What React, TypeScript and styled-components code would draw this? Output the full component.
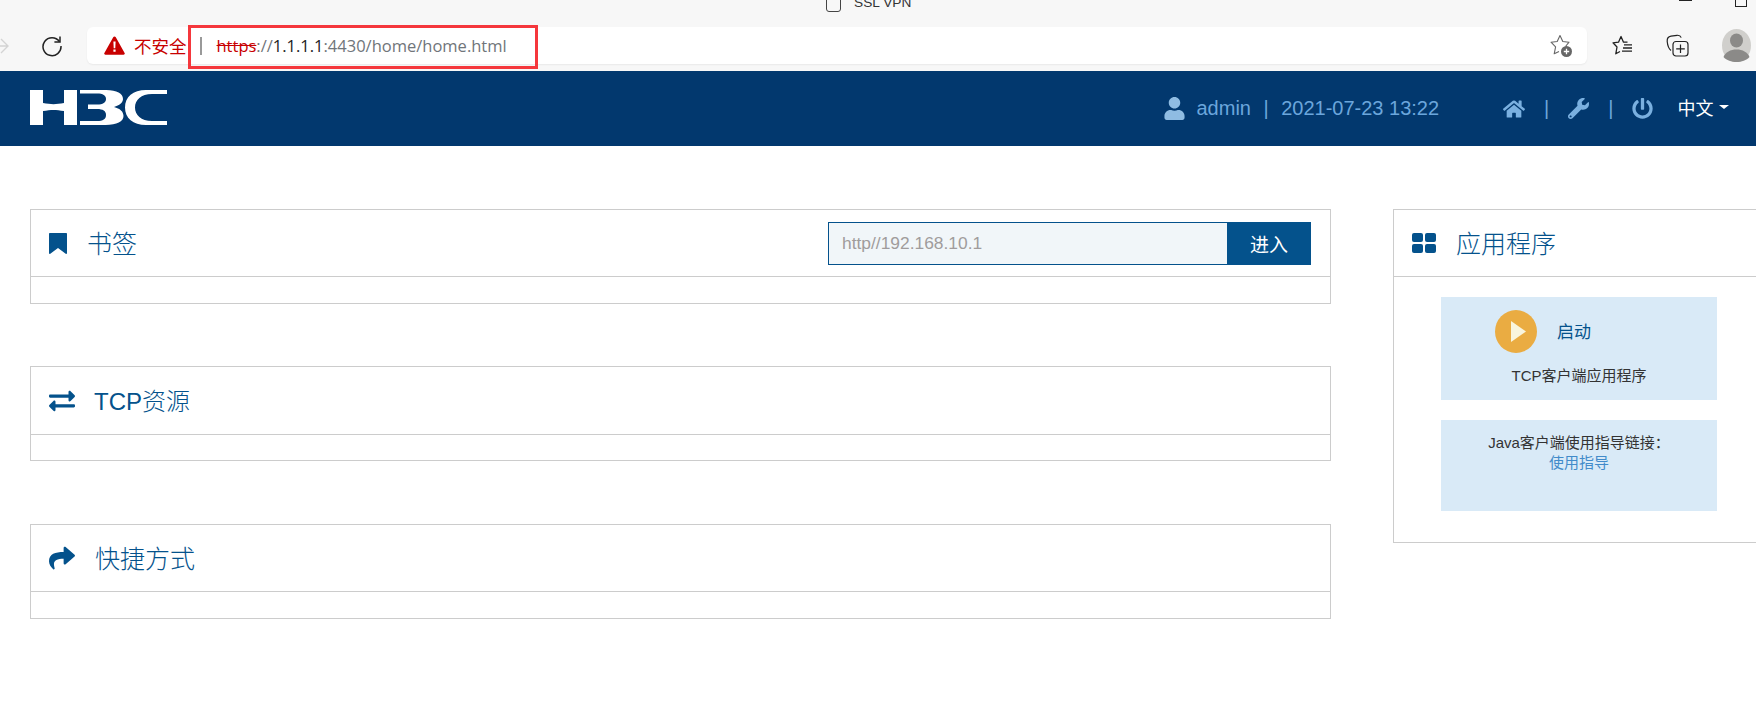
import React from "react";
import styled, { createGlobalStyle } from "styled-components";
import { FaExchangeAlt, FaHome, FaPowerOff, FaShare, FaUser, FaWrench } from "react-icons/fa";

const GlobalStyle = createGlobalStyle`
  html, body {
    margin: 0;
    padding: 0;
    background: #fff;
    overflow: hidden;
  }
  body {
    font-family: "Liberation Sans", "Noto Sans CJK SC", sans-serif;
  }
`;

const blue = "#04528c";
const line = "#cccccc";

function H3cLogo() {
  return (
    <svg width="137" height="35" viewBox="0 0 137 35" fill="#fff">
      <path d="M0 0h13v13c8 1.500 13 1.500 21 0V0h13v35H34V21c-8-1.500-13-1.500-21 0v14H0z" />
      <path d="M50 0h26c11 0 17 3.500 17 9 0 3.500-3.500 6.500-9 8 6 1.500 9.500 4.500 9.500 9 0 5.500-6.500 9-18 9H50v-4h17c6 0 9-2 9-6 0-4-3-6-9-6H58v-4.500h9c6 0 9-2 9-5.500 0-3.500-3-5.500-9-5.500H50z" />
      <path d="M137 0v4h-15c-11 0-17 6-17 13.500S111 31 122 31h15v4h-21c-13 0-21-7-21-17.500S103 0 116 0z" />
    </svg>
  );
}

function ReloadIcon() {
  return (
    <svg width="22" height="22" viewBox="0 0 22 22" fill="none" stroke="#222" strokeWidth="1.5">
      <path d="M18.4 6.500A9 9 0 1 0 20 11" />
      <path d="M19 1.500v5.600h-5.600" />
    </svg>
  );
}

function BackArrow() {
  return (
    <svg width="9" height="18" viewBox="0 0 9 18" fill="none" stroke="#d4d4d4" strokeWidth="1.4">
      <path d="M-6 9h14M1 2l7 7-7 7" />
    </svg>
  );
}

function WarningIcon() {
  return (
    <svg width="21" height="19" viewBox="0 0 21 19">
      <path d="M10.500 0.500c.6 0 1 .3 1.300 .8l8.800 15.600c.5 .9 0 1.800-1 1.800H1.400c-1 0-1.500-.9-1-1.800L9.200 1.300c.3-.5 .7-.8 1.300-.8z" fill="#c80000" />
      <path d="M9.400 5.500h2.200l-.3 6.800H9.700zM9.400 13.600h2.200v2.200H9.400z" fill="#fff" />
    </svg>
  );
}

function StarAddIcon() {
  return (
    <svg width="23" height="24" viewBox="0 0 23 24" fill="none">
      <path d="M15.500 12.500L19 8.200l-6.200-.7L10 1.500 7.200 7.500 1 8.200l4.600 4.600-1.400 7L9 17.500" stroke="#666" strokeWidth="1.100" strokeLinejoin="round" />
      <circle cx="16.500" cy="17.500" r="5.500" fill="#666" />
      <path d="M13.800 17.500h5.400M16.500 14.800v5.400" stroke="#fff" strokeWidth="1.300" />
    </svg>
  );
}

function FavoritesIcon() {
  return (
    <svg width="21" height="21" viewBox="0 0 21 21" fill="none" stroke="#222" strokeWidth="1.300" strokeLinejoin="round">
      <path d="M15.500 7.200h-4L9 1.500 6.500 7.200 1 7.800l4 4.200-1.200 6.800L8 16.500" />
      <path d="M12 9.800h8M11 13h9M10 16.200h10" />
    </svg>
  );
}

function CollectionsIcon() {
  return (
    <svg width="23" height="23" viewBox="0 0 23 23" fill="none" stroke="#222" strokeWidth="1.200">
      <path d="M5 16.500C3 15 1.600 11.500 1.200 7.500 1 4.500 2.500 2.600 5 2.200l6-.9c2-.2 3.500 .5 4.200 2.300" />
      <rect x="7" y="7.500" width="15" height="14.500" rx="3" />
      <path d="M14.500 10.500v8.500M10.200 14.800h8.600" />
    </svg>
  );
}

function Avatar() {
  return (
    <svg width="29" height="33" viewBox="0 0 29 33">
      <ellipse cx="14.500" cy="16.500" rx="14.500" ry="16.500" fill="#d0cfcc" />
      <ellipse cx="14.500" cy="11.500" rx="6.500" ry="7" fill="#8b8a88" />
      <path d="M1.500 28c2-5 7-7.500 13-7.500s11 2.500 13 7.500c-3 3.500-8 5-13 5s-10-1.500-13-5z" fill="#8b8a88" />
    </svg>
  );
}

function BookmarkIcon() {
  return (
    <svg width="18" height="21" viewBox="0 0 18 21" fill={blue}>
      <path d="M1 0h16c.6 0 1 .4 1 1v19c0 .8-.7 1.200-1.300 .7L9 15l-7.700 5.700C.7 21.200 0 20.800 0 20V1c0-.6 .4-1 1-1z" />
    </svg>
  );
}

function GridIcon() {
  return (
    <svg width="24" height="20" viewBox="0 0 24 20" fill={blue}>
      <rect width="11" height="9" rx="2" />
      <rect x="13" width="11" height="9" rx="2" />
      <rect y="11" width="11" height="9" rx="2" />
      <rect x="13" y="11" width="11" height="9" rx="2" />
    </svg>
  );
}

function PlayIcon() {
  return (
    <svg width="42" height="43" viewBox="0 0 42 43">
      <ellipse cx="21" cy="21.500" rx="21" ry="21.500" fill="#eaac42" />
      <path d="M16 11l15 10.500L16 32z" fill="#f9f5de" />
    </svg>
  );
}

export default function App() {
  return (
    <>
      <GlobalStyle />
      <Chrome>
        <TitleRow>
          <TabIcon />
          <TabTitle>SSL VPN</TabTitle>
          <Minimize />
          <Restore />
        </TitleRow>
        <Toolbar>
          <BackSlot>
            <BackArrow />
          </BackSlot>
          <ReloadSlot>
            <ReloadIcon />
          </ReloadSlot>
          <Address>
            <WarningIcon />
            <NotSecure>不安全</NotSecure>
            <Divider />
            <Url>
              <Scheme>https</Scheme>://<Host>1.1.1.1</Host>:4430/home/home.html
            </Url>
            <StarSlot>
              <StarAddIcon />
            </StarSlot>
            <Highlight />
          </Address>
          <ToolIcons>
            <FavoritesIcon />
            <CollectionsIcon />
            <Avatar />
          </ToolIcons>
        </Toolbar>
      </Chrome>

      <Header>
        <LogoSlot>
          <H3cLogo />
        </LogoSlot>
        <UserArea>
          <UserIcon size={23} />
          <HeaderText>admin</HeaderText>
          <HeaderText>|</HeaderText>
          <HeaderText>2021-07-23 13:22</HeaderText>
        </UserArea>
        <ActionArea>
          <FaHome size={22} />
          <ActionPipe>|</ActionPipe>
          <FaWrench size={21} />
          <ActionPipe>|</ActionPipe>
          <FaPowerOff size={21} />
        </ActionArea>
        <LangButton>
          中文<Caret />
        </LangButton>
      </Header>

      <Main>
        <LeftColumn>
          <Panel>
            <PanelHead>
              <BookmarkIcon />
              <PanelTitle $gap={20}>书签</PanelTitle>
              <SearchBox>
                <SearchInput placeholder="http//192.168.10.1" />
                <SearchButton>进入</SearchButton>
              </SearchBox>
            </PanelHead>
            <PanelBody />
          </Panel>
          <Panel $top={62}>
            <PanelHead $height={68}>
              <FaExchangeAlt size={26} />
              <PanelTitle $gap={19} $size={24}>TCP资源</PanelTitle>
            </PanelHead>
            <PanelBody $height={25} />
          </Panel>
          <Panel $top={63}>
            <PanelHead>
              <FaShare size={26} />
              <PanelTitle $gap={20}>快捷方式</PanelTitle>
            </PanelHead>
            <PanelBody />
          </Panel>
        </LeftColumn>

        <RightPanel>
          <PanelHead>
            <GridIcon />
            <PanelTitle $gap={20}>应用程序</PanelTitle>
          </PanelHead>
          <AppBody>
            <StartCard>
              <StartRow>
                <PlayIcon />
                <StartLabel>启动</StartLabel>
              </StartRow>
              <CardText>TCP客户端应用程序</CardText>
            </StartCard>
            <GuideCard>
              <CardText>Java客户端使用指导链接：</CardText>
              <GuideLink href="#">使用指导</GuideLink>
            </GuideCard>
          </AppBody>
        </RightPanel>
      </Main>
    </>
  );
}

const Chrome = styled.div`
  height: 71px;
  background: #f7f7f7;
  overflow: hidden;
`;

const TitleRow = styled.div`
  height: 27px;
  display: flex;
  align-items: flex-start;
`;

const TabIcon = styled.div`
  width: 15px;
  height: 18px;
  margin: -6px 0 0 826px;
  box-sizing: border-box;
  border: 1.5px solid #444;
  border-radius: 3px;
`;

const TabTitle = styled.div`
  margin: -5px 0 0 13px;
  font-size: 13.7px;
  line-height: 16px;
  color: #333;
`;

const Minimize = styled.div`
  width: 13px;
  height: 1px;
  margin-left: 768px;
  background: #222;
`;

const Restore = styled.div`
  width: 12px;
  height: 14px;
  margin: -7px 0 0 43px;
  box-sizing: border-box;
  border: 1px solid #222;
`;

const Toolbar = styled.div`
  display: flex;
  align-items: center;
  height: 37px;
`;

const BackSlot = styled.div`
  width: 41px;
  display: flex;
`;

const ReloadSlot = styled.div`
  width: 46px;
  display: flex;
`;

const Address = styled.div`
  position: relative;
  width: 1500px;
  height: 37px;
  box-sizing: border-box;
  padding: 0 14px 0 17px;
  display: flex;
  align-items: center;
  background: #fff;
  border-radius: 6px;
  box-shadow: 0 1px 2px rgba(0, 0, 0, 0.06);
`;

const NotSecure = styled.span`
  margin-left: 9px;
  font-size: 17.5px;
  color: #c80000;
  font-family: "Noto Sans CJK SC", sans-serif;
`;

const Divider = styled.span`
  width: 2px;
  height: 18px;
  margin-left: 13px;
  background: #999;
`;

const Url = styled.span`
  margin-left: 15px;
  font-family: "Open Sans", "Liberation Sans", sans-serif;
  font-size: 16.5px;
  color: #70757a;
`;

const Scheme = styled.span`
  color: #c80000;
  text-decoration: line-through;
`;

const Host = styled.span`
  color: #222;
`;

const StarSlot = styled.div`
  margin-left: auto;
  display: flex;
`;

const Highlight = styled.div`
  position: absolute;
  left: 101px;
  top: -2px;
  width: 350px;
  height: 44px;
  box-sizing: border-box;
  border: 3px solid #f5373c;
`;

const ToolIcons = styled.div`
  display: flex;
  align-items: center;
  margin-left: 25px;
  gap: 33px;
`;

const Header = styled.header`
  height: 75px;
  box-sizing: border-box;
  padding-left: 30px;
  display: flex;
  align-items: center;
  background: #02386e;
`;

const LogoSlot = styled.div`
  display: flex;
  margin-bottom: 2px;
`;

const UserArea = styled.div`
  margin-left: 996px;
  display: flex;
  align-items: center;
  flex: none;
  width: 278px;
  gap: 12.5px;
`;

const UserIcon = styled(FaUser)`
  flex: none;
  margin-right: -2px;
  color: #8fbce2;
`;

const HeaderText = styled.span`
  font-size: 20px;
  white-space: nowrap;
  color: #6ba6dc;
`;

const ActionArea = styled.div`
  margin-left: 62px;
  display: flex;
  align-items: center;
  gap: 19px;
  color: #7ab0e0;
`;

const ActionPipe = styled.span`
  font-size: 20px;
  color: #6ba6dc;
`;

const LangButton = styled.div`
  margin: 0 0 3px 24px;
  display: flex;
  align-items: center;
  font-family: "Noto Sans CJK SC", sans-serif;
  font-size: 18px;
  color: #fff;
`;

const Caret = styled.span`
  width: 0;
  height: 0;
  margin-left: 6px;
  border-left: 5px solid transparent;
  border-right: 5px solid transparent;
  border-top: 4px solid #fff;
`;

const Main = styled.main`
  display: flex;
  align-items: flex-start;
  padding: 63px 0 0 30px;
  gap: 62px;
`;

const LeftColumn = styled.div`
  width: 1301px;
  flex: none;
`;

const Panel = styled.section<{ $top?: number }>`
  margin-top: ${(p) => p.$top ?? 0}px;
  border: 1px solid ${line};
`;

const PanelHead = styled.div<{ $height?: number }>`
  height: ${(p) => p.$height ?? 67}px;
  box-sizing: border-box;
  padding: 0 18px;
  display: flex;
  align-items: center;
  color: ${blue};
  border-bottom: 1px solid ${line};
`;

const PanelTitle = styled.h3<{ $gap: number; $size?: number }>`
  margin: 0 0 2px ${(p) => p.$gap}px;
  font-family: "Liberation Sans", "Noto Sans CJK SC", sans-serif;
  font-size: ${(p) => p.$size ?? 25}px;
  font-weight: 300;
  color: ${blue};
`;

const PanelBody = styled.div<{ $height?: number }>`
  height: ${(p) => p.$height ?? 26}px;
`;

const SearchBox = styled.div`
  margin-left: auto;
  margin-right: 1px;
  display: flex;
  width: 483px;
  height: 43px;
`;

const SearchInput = styled.input`
  flex: 1;
  min-width: 0;
  box-sizing: border-box;
  padding: 0 13px;
  border: 1px solid ${blue};
  border-right: none;
  outline: none;
  background: #f1f6f9;
  font-family: "Liberation Sans", sans-serif;
  font-size: 17.4px;
  &::placeholder {
    color: #a09c9c;
    opacity: 1;
  }
`;

const SearchButton = styled.button`
  width: 84px;
  border: none;
  padding: 0;
  background: ${blue};
  color: #fff;
  font-family: "Noto Sans CJK SC", sans-serif;
  font-size: 19px;
`;

const RightPanel = styled.aside`
  flex: none;
  width: 420px;
  height: 334px;
  box-sizing: border-box;
  border: 1px solid ${line};
`;

const AppBody = styled.div`
  width: 276px;
  margin-left: 47px;
  padding-top: 20px;
  display: flex;
  flex-direction: column;
  gap: 20px;
`;

const StartCard = styled.div`
  height: 103px;
  background: #d9eaf7;
  text-align: center;
`;

const StartRow = styled.div`
  display: flex;
  align-items: center;
  gap: 20px;
  padding: 13px 0 13px 54px;
`;

const StartLabel = styled.span`
  margin-bottom: 3px;
  font-family: "Noto Sans CJK SC", sans-serif;
  font-size: 17px;
  color: ${blue};
`;

const CardText = styled.div`
  font-size: 15px;
  line-height: 20px;
  color: #333;
`;

const GuideCard = styled.div`
  height: 91px;
  padding-top: 13px;
  box-sizing: border-box;
  background: #d9eaf7;
  text-align: center;
`;

const GuideLink = styled.a`
  display: block;
  font-size: 15px;
  line-height: 20px;
  color: #428bca;
  text-decoration: none;
`;
